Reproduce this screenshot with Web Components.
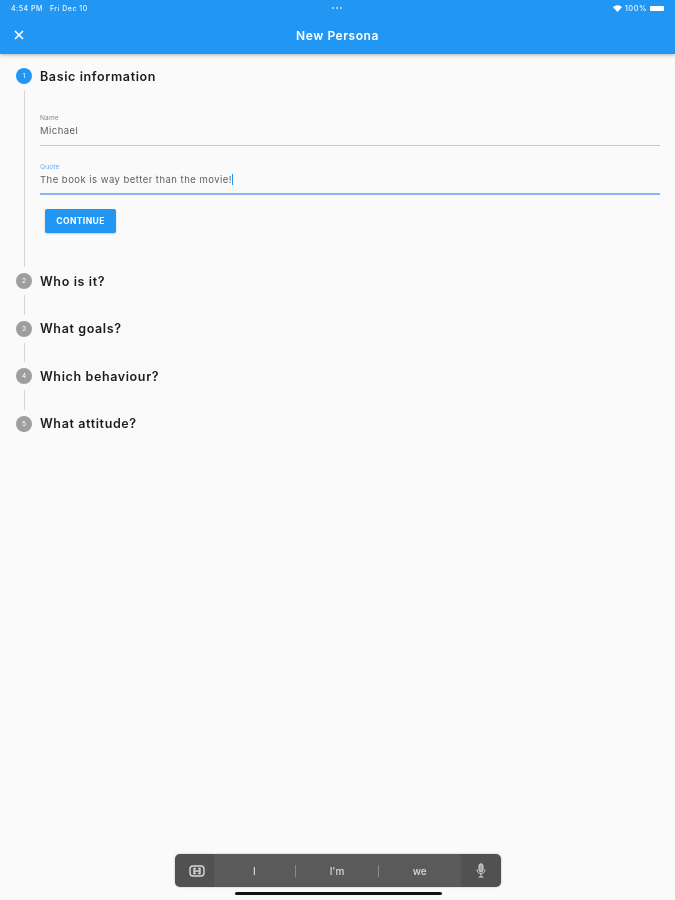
<!DOCTYPE html>
<html>
<head>
<meta charset="utf-8">
<title>New Persona</title>
<style>
  html, body { margin: 0; padding: 0; background: #fafafa; }
  body { font-family: Inter, "Liberation Sans", sans-serif; }
</style>
</head>
<body>
<persona-screen>
  <status-bar></status-bar>
  <app-bar title="New Persona"></app-bar>
  <step-list>
    <step-item number="1" label="Basic information" active>
      <text-field label="Name" value="Michael"></text-field>
      <text-field label="Quote" value="The book is way better than the movie!" focused></text-field>
      <raised-button>CONTINUE</raised-button>
    </step-item>
    <step-item number="2" label="Who is it?"></step-item>
    <step-item number="3" label="What goals?"></step-item>
    <step-item number="4" label="Which behaviour?"></step-item>
    <step-item number="5" label="What attitude?" last></step-item>
  </step-list>
  <keyboard-bar></keyboard-bar>
</persona-screen>

<script>
  class PersonaScreen extends HTMLElement {
    constructor() {
      super();
      this.attachShadow({ mode: 'open' });
      this.shadowRoot.innerHTML = `
        <style>
          :host {
            display: flex;
            flex-direction: column;
            height: 900px;
            overflow: hidden;
            background: #fafafa;
            filter: blur(0.45px);
          }
        </style>
        <slot></slot>
      `;
    }
  }

  class StatusBar extends HTMLElement {
    constructor() {
      super();
      this.attachShadow({ mode: 'open' });
      this.shadowRoot.innerHTML = `
        <style>
          :host {
            display: flex;
            align-items: center;
            justify-content: space-between;
            height: 15px;
            padding: 1px 11px 0 11px;
            background: #2196f3;
            color: rgba(255, 255, 255, 0.9);
            font-size: 7px;
            font-weight: 500;
            letter-spacing: 0.5px;
            position: relative;
            z-index: 2;
          }

          .left { display: flex; gap: 7px; }
          .right { display: flex; align-items: center; gap: 3px; }

          .dots {
            position: absolute;
            left: 332px;
            top: 7px;
            display: flex;
            gap: 2px;
          }

          .dots i {
            width: 2px;
            height: 2px;
            border-radius: 50%;
            background: rgba(255, 255, 255, 0.75);
          }

          .percent { font-size: 7.5px; margin-right: -1px; }

          .battery {
            width: 14px;
            height: 5px;
            margin-left: 1px;
            border-radius: 1px;
            background: #fff;
          }
        </style>
        <div class="left"><span>4:54 PM</span><span>Fri Dec 10</span></div>
        <div class="dots"><i></i><i></i><i></i></div>
        <div class="right">
          <svg width="9" height="7" viewBox="0 0 24 18"><path fill="#fff" d="M12 18 0 5.5C3 2.2 7.3 0 12 0s9 2.2 12 5.5z"/></svg>
          <span class="percent">100%</span>
          <div class="battery"></div>
        </div>
      `;
    }
  }

  class AppBar extends HTMLElement {
    constructor() {
      super();
      this.attachShadow({ mode: 'open' });
      this.shadowRoot.innerHTML = `
        <style>
          :host {
            display: flex;
            align-items: center;
            position: relative;
            height: 38px;
            background: #2196f3;
            color: #fff;
            box-shadow: 0 1px 4px rgba(0, 0, 0, 0.3);
            z-index: 1;
          }

          svg { margin-left: 14px; }

          .title {
            position: absolute;
            left: 0;
            right: 0;
            text-align: center;
            font-size: 12px;
            font-weight: 600;
            letter-spacing: 0.56px;
          }
        </style>
        <svg width="10" height="10" viewBox="0 0 10 10"><path d="M1 1 9 9M9 1 1 9" stroke="#fff" stroke-width="1.6" fill="none"/></svg>
        <div class="title"></div>
      `;
      this.shadowRoot.querySelector('.title').textContent = this.getAttribute('title');
    }
  }

  class StepList extends HTMLElement {
    constructor() {
      super();
      this.attachShadow({ mode: 'open' });
      this.shadowRoot.innerHTML = `
        <style>
          :host {
            display: flex;
            flex-direction: column;
            flex: 1;
            padding: 14px 15px 0 16px;
          }
        </style>
        <slot></slot>
      `;
    }
  }

  class StepItem extends HTMLElement {
    constructor() {
      super();
      this.attachShadow({ mode: 'open' });
      this.shadowRoot.innerHTML = `
        <style>
          :host {
            display: block;
            color: #1c1c1c;
          }

          .head {
            display: flex;
            align-items: center;
            gap: 8px;
            height: 16px;
          }

          .dot {
            width: 16px;
            height: 16px;
            border-radius: 50%;
            background: #9e9e9e;
            color: #fff;
            font-size: 6.5px;
            display: flex;
            align-items: center;
            justify-content: center;
            flex: none;
          }

          :host([active]) .dot { background: #2196f3; }

          .label {
            font-size: 12.5px;
            font-weight: 600;
            letter-spacing: 0.62px;
          }

          .rail {
            margin: 6px 0 6px 7.5px;
            min-height: 19.5px;
            border-left: 1px solid #d6d6d6;
            padding-left: 15.5px;
          }

          :host([last]) .rail { display: none; }
          :host(:not([active])) .body { display: none; }

          .body {
            display: flex;
            flex-direction: column;
            align-items: flex-start;
            padding: 16px 0 34px;
          }
        </style>
        <div class="head"><div class="dot"></div><div class="label"></div></div>
        <div class="rail"><div class="body"><slot></slot></div></div>
      `;
      this.shadowRoot.querySelector('.dot').textContent = this.getAttribute('number');
      this.shadowRoot.querySelector('.label').textContent = this.getAttribute('label');
    }
  }

  class TextField extends HTMLElement {
    constructor() {
      super();
      this.attachShadow({ mode: 'open' });
      this.shadowRoot.innerHTML = `
        <style>
          :host {
            display: block;
            align-self: stretch;
            height: 40px;
            margin-bottom: 9px;
            box-sizing: border-box;
            border-bottom: 1px solid #c8c8c8;
            color: #616161;
          }

          :host([focused]) { border-bottom: 2px solid #8ab6f7; }

          .label {
            font-size: 6.5px;
            line-height: 8px;
            padding-top: 8px;
            letter-spacing: 0.2px;
            color: #8a8a8a;
          }

          :host([focused]) .label { color: #6ea8f5; }

          .value {
            font-size: 9.5px;
            line-height: 14px;
            margin-top: 2px;
            letter-spacing: 0.47px;
          }

          .caret {
            display: none;
            width: 1px;
            height: 11px;
            background: #2196f3;
            vertical-align: -2px;
          }

          :host([focused]) .caret { display: inline-block; }
        </style>
        <div class="label"></div>
        <div class="value"><span></span><i class="caret"></i></div>
      `;
      this.shadowRoot.querySelector('.label').textContent = this.getAttribute('label');
      this.shadowRoot.querySelector('.value span').textContent = this.getAttribute('value');
    }
  }

  class RaisedButton extends HTMLElement {
    constructor() {
      super();
      this.attachShadow({ mode: 'open' });
      this.shadowRoot.innerHTML = `
        <style>
          :host {
            display: flex;
            align-items: center;
            justify-content: center;
            width: 71px;
            height: 24px;
            margin: 5px 0 0 5px;
            border-radius: 2px;
            background: #2196f3;
            color: #fff;
            font-size: 8.5px;
            font-weight: 700;
            letter-spacing: 0.4px;
            box-shadow: 0 1px 2px rgba(0, 0, 0, 0.2);
          }
        </style>
        <slot></slot>
      `;
    }
  }

  class KeyboardBar extends HTMLElement {
    constructor() {
      super();
      this.attachShadow({ mode: 'open' });
      this.shadowRoot.innerHTML = `
        <style>
          :host {
            display: flex;
            flex-direction: column;
            align-items: center;
            gap: 5px;
            padding-bottom: 5px;
          }

          .bar {
            display: flex;
            align-items: stretch;
            width: 326px;
            height: 33px;
            box-sizing: border-box;
            border-radius: 5px;
            background: #515151;
            color: #d8d8d8;
            font-size: 10px;
            font-weight: 500;
            box-shadow: 0 0 2px rgba(0, 0, 0, 0.3);
          }

          .icon {
            width: 40px;
            display: flex;
            align-items: center;
            justify-content: center;
            flex: none;
          }

          .icon.first { width: 39px; padding-left: 5px; box-sizing: border-box; }

          .words {
            flex: 1;
            display: flex;
            align-items: center;
            background: #5a5a5a;
          }

          .words span {
            flex: 1;
            text-align: center;
          }

          .words span + span { border-left: 1px solid #8a8a8a; }

          .home {
            width: 207px;
            height: 3px;
            margin-left: 1px;
            border-radius: 2px;
            background: #111;
          }
        </style>
        <div class="bar">
          <div class="icon first">
            <svg width="16" height="12" viewBox="0 0 16 12" fill="none" stroke="#d8d8d8" stroke-width="1.4"><rect x="1" y="1" width="14" height="10" rx="3"/><path d="M7 3.5H5v5h2M9 3.5h2v5H9M5 6h6"/></svg>
          </div>
          <div class="words"><span>I</span><span>I'm</span><span>we</span></div>
          <div class="icon">
            <svg width="10" height="15" viewBox="0 0 10 15" fill="none" stroke="#d8d8d8" stroke-width="1"><rect x="3" y="0.8" width="4" height="8" rx="2" fill="#a8a8a8"/><path d="M1 6.5c0 2.5 1.7 4 4 4s4-1.5 4-4M5 10.5V14M2.5 14h5"/></svg>
          </div>
        </div>
        <div class="home"></div>
      `;
    }
  }

  customElements.define('persona-screen', PersonaScreen);
  customElements.define('status-bar', StatusBar);
  customElements.define('app-bar', AppBar);
  customElements.define('step-list', StepList);
  customElements.define('step-item', StepItem);
  customElements.define('text-field', TextField);
  customElements.define('raised-button', RaisedButton);
  customElements.define('keyboard-bar', KeyboardBar);
</script>
</body>
</html>
